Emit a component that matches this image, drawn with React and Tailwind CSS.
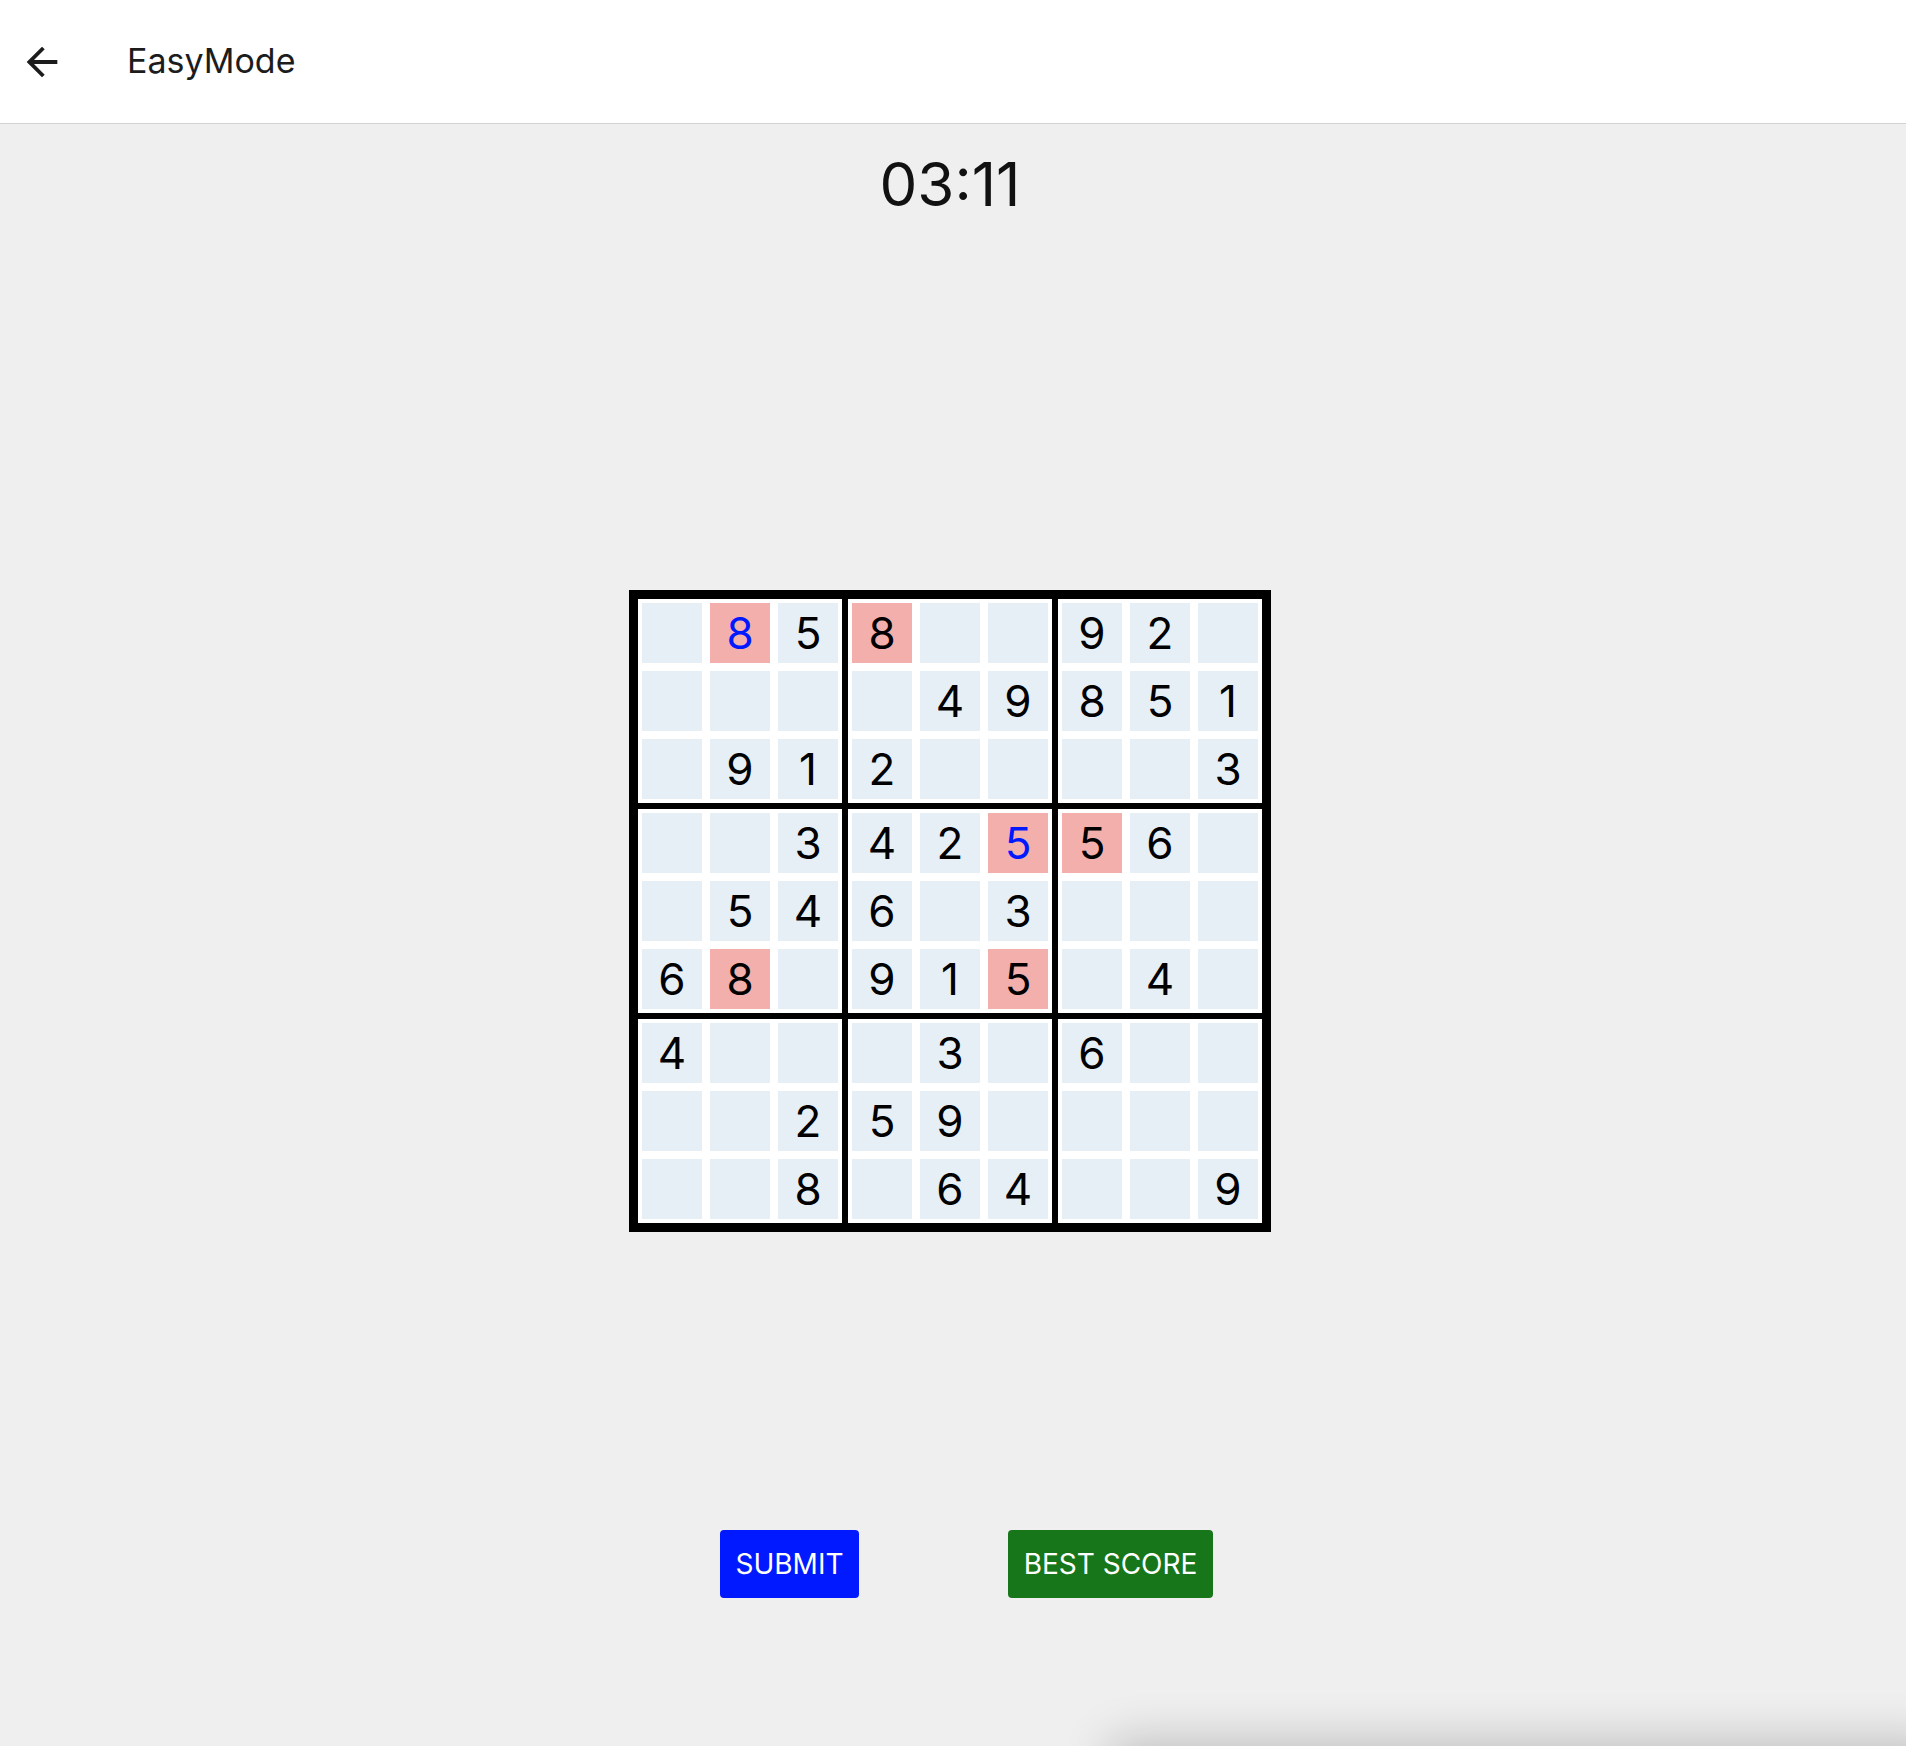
const board = [
  [0, 8, 5, 8, 0, 0, 9, 2, 0],
  [0, 0, 0, 0, 4, 9, 8, 5, 1],
  [0, 9, 1, 2, 0, 0, 0, 0, 3],
  [0, 0, 3, 4, 2, 5, 5, 6, 0],
  [0, 5, 4, 6, 0, 3, 0, 0, 0],
  [6, 8, 0, 9, 1, 5, 0, 4, 0],
  [4, 0, 0, 0, 3, 0, 6, 0, 0],
  [0, 0, 2, 5, 9, 0, 0, 0, 0],
  [0, 0, 8, 0, 6, 4, 0, 0, 9],
];

// conflicting cells (row-col) and the ones the player typed in
const conflicts = new Set(["0-1", "0-3", "3-5", "3-6", "5-1", "5-5"]);
const userInput = new Set(["0-1", "3-5"]);

function Cell({ r, c }) {
  const v = board[r][c];
  const key = `${r}-${c}`;
  const bad = conflicts.has(key);
  const mine = userInput.has(key);
  return (
    <div
      className={`w-[60px] h-[60px] flex items-center justify-center text-[44px] leading-none ${
        bad ? "bg-[#f3afab]" : "bg-[#e6eef6]"
      } ${mine ? "text-[#0019ff]" : "text-black"}`}
    >
      {v || ""}
    </div>
  );
}

function Box({ br, bc }) {
  const cells = [];
  for (let i = 0; i < 3; i++)
    for (let j = 0; j < 3; j++)
      cells.push(<Cell key={`${i}${j}`} r={br * 3 + i} c={bc * 3 + j} />);
  return (
    <div className="border-[3px] border-black bg-white p-1 grid grid-cols-3 gap-2">
      {cells}
    </div>
  );
}

export default function App() {
  return (
    <div
      className="relative h-[1746px] overflow-hidden bg-[#efefef] text-[#1c1c1c]"
      style={{ fontFamily: "Inter, 'Noto Sans', sans-serif" }}
    >
      {/* TOP BAR */}
      <header className="h-[124px] bg-white border-b border-[#d3d3d3] flex items-center">
        <button className="ml-[19px] w-[46px] h-[46px] flex items-center justify-center">
          <svg viewBox="0 0 24 24" width="46" height="46" fill="#1c1c1c">
            <path d="M20 11H7.83l5.59-5.59L12 4l-8 8 8 8 1.41-1.41L7.83 13H20v-2z" />
          </svg>
        </button>
        <h1 className="ml-[62px] text-[34px] font-normal text-[#1c1c1c] pb-[2px]">EasyMode</h1>
      </header>

      <main className="flex flex-col items-center pr-[6px]">
        <div className="mt-[30px] text-[60px] leading-[60px] text-[#111]">03:11</div>

        {/* BOARD */}
        <div className="mt-[376px] grid grid-cols-3 border-[6px] border-black">
          {[0, 1, 2].map((br) =>
            [0, 1, 2].map((bc) => <Box key={`${br}${bc}`} br={br} bc={bc} />)
          )}
        </div>

        <div className="mt-[298px] flex">
          <div className="w-[321px] flex justify-center">
            <button className="h-[68px] px-[15px] rounded-[4px] bg-[#0019ff] text-white text-[28px] leading-none">
              SUBMIT
            </button>
          </div>
          <div className="w-[321px] flex justify-center">
            <button className="h-[68px] px-[16px] rounded-[4px] bg-[#18761a] text-white text-[28px] leading-none">
              BEST SCORE
            </button>
          </div>
        </div>
      </main>

      {/* snackbar sitting just below the fold, only its shadow shows */}
      <div className="absolute top-full left-[1110px] right-[-40px] h-[80px] bg-white shadow-[0_-6px_48px_rgba(0,0,0,0.2)]" />
    </div>
  );
}
